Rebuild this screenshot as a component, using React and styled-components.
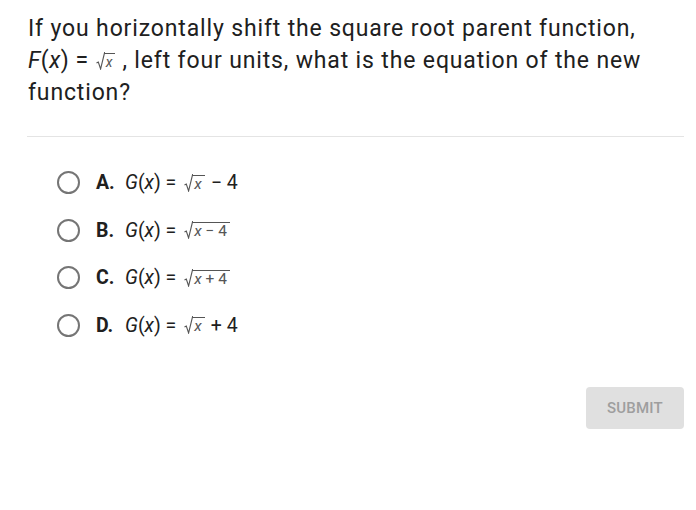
import React from "react";
import styled, { createGlobalStyle } from "styled-components";

const Global = createGlobalStyle`
  body {
    margin: 0;
    background: #fff;
    font-family: Roboto, "Liberation Sans", sans-serif;
    color: #202020;
  }
`;

const Page = styled.div`
  padding: 13px 12px 0 27px;
`;

const Question = styled.div`
  font-size: 23px;
  line-height: 32px;
  letter-spacing: 0.85px;
  padding-left: 1px;
`;

const Divider = styled.hr`
  border: none;
  border-top: 1px solid #e4e4e4;
  margin: 27px 0 0 0;
`;

const Options = styled.div`
  display: flex;
  flex-direction: column;
  padding: 22px 0 0 30px;
`;

const Option = styled.label`
  display: flex;
  align-items: center;
  height: 47.5px;
  font-size: 19.5px;
  cursor: pointer;
`;

const Radio = styled.span`
  width: 19px;
  height: 19px;
  border: 2.5px solid #757575;
  border-radius: 50%;
  flex: none;
`;

const Letter = styled.b`
  font-weight: 700;
  margin-left: 16px;
  width: 29px;
`;

const Math = styled.span`
  display: inline-flex;
  align-items: center;
  white-space: pre;
  letter-spacing: ${(p) => (p.$spaced ? "0.5px" : "0")};
`;

const Var = styled.i`
  font-style: italic;
`;

const RootWrap = styled.span`
  display: inline-flex;
  align-items: flex-end;
  margin: 0 ${(p) => (p.$small ? 7 : 6)}px 0 ${(p) => (p.$small ? 7 : 8)}px;
  color: #555;
  letter-spacing: 0;
`;

const Radicand = styled.span`
  border-top: 1px solid #555;
  font-size: ${(p) => (p.$small ? 14 : 15.5)}px;
  line-height: 15px;
  padding: 1px 3px 0 2px;
  margin-left: -1px;
  white-space: pre;
`;

const Footer = styled.div`
  display: flex;
  justify-content: flex-end;
  padding-top: 38px;
`;

const Submit = styled.button`
  width: 98px;
  height: 42px;
  border: none;
  border-radius: 4px;
  background: #e0e0e0;
  color: #9e9e9e;
  font-family: Roboto, "Liberation Sans", sans-serif;
  font-size: 15px;
  font-weight: 500;
  letter-spacing: 0.2px;
`;

const Sqrt = ({ children, small }) => (
  <RootWrap $small={small}>
    <svg width="9" height="18" viewBox="0 0 9 18">
      <path
        d="M0.5 11 L2.3 10 L4.6 17 L8.6 0.5 L9 0.5"
        fill="none"
        stroke="#555"
        strokeWidth="1.1"
      />
    </svg>
    <Radicand $small={small}>{children}</Radicand>
  </RootWrap>
);

const choices = [
  { key: "A", body: <>{<Sqrt><Var>x</Var></Sqrt>}− 4</> },
  { key: "B", body: <Sqrt><Var>x</Var> − 4</Sqrt> },
  { key: "C", body: <Sqrt><Var>x</Var> + 4</Sqrt> },
  { key: "D", body: <>{<Sqrt><Var>x</Var></Sqrt>}+ 4</> },
];

export default function App() {
  return (
    <Page>
      <Global />
      <Question>
        If you horizontally shift the square root parent function,
        <br />
        <Math $spaced>
          <Var>F</Var>(<Var>x</Var>) =
          <Sqrt small>
            <Var>x</Var>
          </Sqrt>
        </Math>
        , left four units, what is the equation of the new
        <br />
        function?
      </Question>
      <Divider />
      <Options>
        {choices.map((c) => (
          <Option key={c.key}>
            <Radio />
            <Letter>{c.key}.</Letter>
            <Math>
              <Var>G</Var>(<Var>x</Var>) =
              {c.body}
            </Math>
          </Option>
        ))}
      </Options>
      <Footer>
        <Submit>SUBMIT</Submit>
      </Footer>
    </Page>
  );
}
